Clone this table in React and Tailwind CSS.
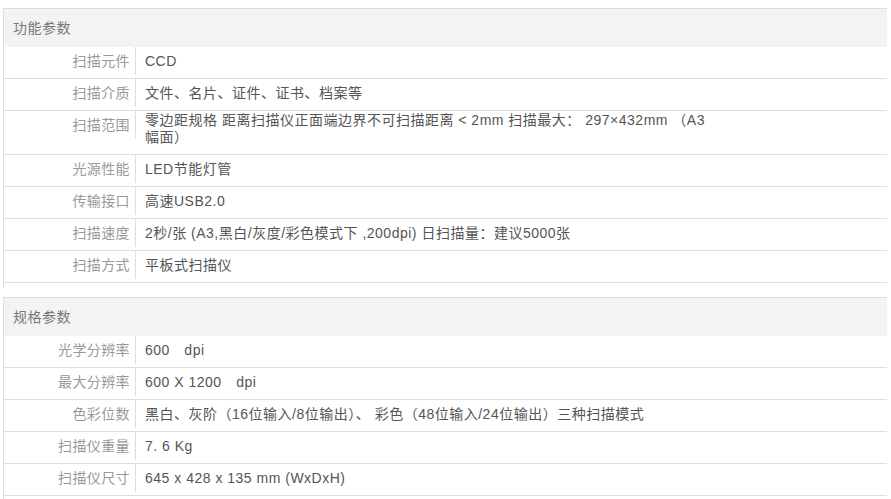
import React from "react";

const font = { fontFamily: '"Liberation Sans", "Noto Sans CJK SC", sans-serif' };

function Row({ label, children, multi }) {
  return (
    <div className="flex border-b border-[#dddddd]">
      <div className="w-[132px] shrink-0 h-[28px] leading-[28px] text-right pr-[5px] border-r border-[#dddddd] text-[#999999] text-[14px] tracking-[0.4px]">
        {label}
      </div>
      {multi ? (
        <div className="w-[578px] pl-[9px] pt-[1px] pb-[8px] leading-[17px] text-[14px] text-[#555555] tracking-[0.5px]">
          {children}
        </div>
      ) : (
        <div className="pl-[9px] pb-[3px] h-[31px] leading-[28px] text-[14px] text-[#555555] whitespace-nowrap tracking-[0.5px]">
          {children}
        </div>
      )}
    </div>
  );
}

function Table({ title, children }) {
  return (
    <div className="w-[884px] ml-[3px] border-t border-l border-[#dddddd]">
      <div className="h-[38px] bg-[#f3f3f3] pl-[9px] leading-[38px] text-[14px] text-[#777777] tracking-[0.5px]">{title}</div>
      {children}
      <div className="h-[5px]" />
    </div>
  );
}

export default function App() {
  return (
    <div className="w-[891px] h-[499px] overflow-hidden bg-white pt-[8px]" style={font}>
      <Table title="功能参数">
        <Row label="扫描元件">CCD</Row>
        <Row label="扫描介质">文件、名片、证件、证书、档案等</Row>
        <Row label="扫描范围" multi>
          零边距规格 距离扫描仪正面端边界不可扫描距离 &lt; 2mm 扫描最大： 297×432mm （A3幅面）
        </Row>
        <Row label="光源性能">LED节能灯管</Row>
        <Row label="传输接口">高速USB2.0</Row>
        <Row label="扫描速度">2秒/张 (A3,黑白/灰度/彩色模式下 ,200dpi) 日扫描量：建议5000张</Row>
        <Row label="扫描方式">平板式扫描仪</Row>
      </Table>
      <div className="h-[9px]" />
      <Table title="规格参数">
        <Row label="光学分辨率">600{"\u3000"}dpi</Row>
        <Row label="最大分辨率">600 X 1200{"\u3000"}dpi</Row>
        <Row label="色彩位数">黑白、灰阶（16位输入/8位输出）、 彩色（48位输入/24位输出）三种扫描模式</Row>
        <Row label="扫描仪重量">7. 6 Kg</Row>
        <Row label="扫描仪尺寸">645 x 428 x 135 mm (WxDxH)</Row>
      </Table>
    </div>
  );
}
